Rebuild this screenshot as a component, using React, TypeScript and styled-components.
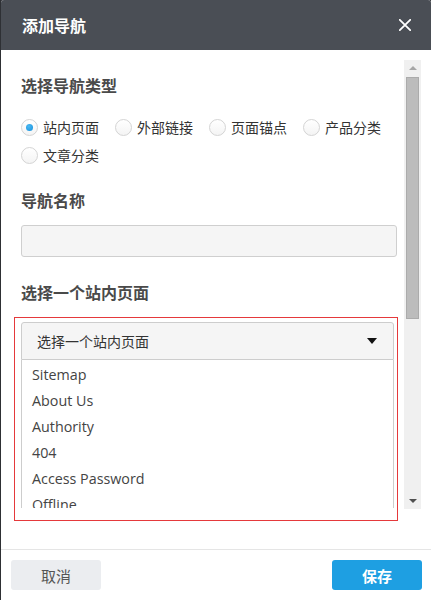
import React from 'react';
import styled, { createGlobalStyle } from 'styled-components';

const GlobalStyle = createGlobalStyle`
  html, body {
    margin: 0;
    padding: 0;
    background: #2e3034;
  }
  * {
    box-sizing: border-box;
  }
`;

const navTypes = ['站内页面', '外部链接', '页面锚点', '产品分类', '文章分类'];
const pages = ['Sitemap', 'About Us', 'Authority', '404', 'Access Password', 'Offline'];

const App: React.FC = () => {
  return (
    <>
      <GlobalStyle />
      <Dialog>
        <Header>
          <Title>添加导航</Title>
          <CloseButton aria-label="close">
            <svg width="12" height="12" viewBox="0 0 12 12">
              <path d="M0.8 0.8 L11.2 11.2 M11.2 0.8 L0.8 11.2" stroke="#fff" strokeWidth="1.8" strokeLinecap="round" />
            </svg>
          </CloseButton>
        </Header>

        <Body>
          <Content>
            <SectionTitle>选择导航类型</SectionTitle>
            <RadioGroup>
              {navTypes.map((t, i) => (
                <RadioItem key={t}>
                  <RadioCircle checked={i === 0} />
                  <RadioLabel>{t}</RadioLabel>
                </RadioItem>
              ))}
            </RadioGroup>

            <SectionTitle $gap={19}>导航名称</SectionTitle>
            <TextInput />

            <SectionTitle $gap={23}>选择一个站内页面</SectionTitle>
            <Highlight>
              <SelectBox>
                <SelectText>选择一个站内页面</SelectText>
                <Caret />
              </SelectBox>
              <ListBox>
                {pages.map((p) => (
                  <ListItem key={p}>{p}</ListItem>
                ))}
              </ListBox>
            </Highlight>
          </Content>

          <ScrollTrack>
            <ScrollArrow $up />
            <ScrollThumb />
            <TrackSpacer />
            <ScrollArrow />
          </ScrollTrack>
        </Body>

        <Footer>
          <CancelButton>取消</CancelButton>
          <SaveButton>保存</SaveButton>
        </Footer>
      </Dialog>
    </>
  );
};

export default App;

const Dialog = styled.div`
  margin-left: 1px;
  width: 430px;
  height: 600px;
  background: #fff;
  display: flex;
  flex-direction: column;
  border-radius: 3px 3px 0 0;
  overflow: hidden;
  font-family: 'Noto Sans', 'Noto Sans CJK SC', sans-serif;
`;

const Header = styled.header`
  height: 50px;
  flex: 0 0 50px;
  background: #4a4e55;
  display: flex;
  align-items: center;
  justify-content: space-between;
  padding: 0 20px 0 21px;
`;

const Title = styled.h1`
  margin: 0;
  color: #fff;
  font-size: 16px;
  font-weight: 700;
  font-family: 'Noto Sans CJK SC', sans-serif;
`;

const CloseButton = styled.button`
  border: none;
  background: transparent;
  padding: 0;
  width: 12px;
  height: 12px;
  display: flex;
  cursor: pointer;
`;

const Body = styled.div`
  flex: 1;
  display: flex;
  min-height: 0;
`;

const Content = styled.div`
  flex: 1;
  padding: 23px 7px 0 20px;
  display: flex;
  flex-direction: column;
`;

const SectionTitle = styled.h2<{ $gap?: number }>`
  margin: ${(p) => p.$gap ?? 0}px 0 0;
  font-size: 16px;
  line-height: 24px;
  font-weight: 700;
  color: #4a4a4a;
  font-family: 'Noto Sans CJK SC', sans-serif;
`;

const RadioGroup = styled.div`
  margin-top: 16px;
  display: flex;
  flex-wrap: wrap;
  column-gap: 16px;
`;

const RadioItem = styled.label`
  height: 28px;
  display: flex;
  align-items: center;
  gap: 5px;
  cursor: pointer;
`;

const RadioCircle = styled.span<{ checked?: boolean }>`
  width: 17px;
  height: 17px;
  border-radius: 50%;
  border: 1px solid #d4d4d4;
  background: linear-gradient(#fff, #f4f4f4);
  display: flex;
  align-items: center;
  justify-content: center;

  &::after {
    content: '';
    display: ${(p) => (p.checked ? 'block' : 'none')};
    width: 7px;
    height: 7px;
    border-radius: 50%;
    background: radial-gradient(circle at 40% 35%, #4ab8f2, #1690dc);
  }
`;

const RadioLabel = styled.span`
  font-size: 14px;
  color: #333;
  font-family: 'Noto Sans CJK SC', sans-serif;
`;

const TextInput = styled.input`
  margin-top: 13px;
  height: 32px;
  width: 100%;
  background: #f5f5f5;
  border: 1px solid #cfcfcf;
  border-radius: 3px;
  outline: none;
`;

const Highlight = styled.div`
  margin: 13px -1px 0 -7px;
  padding: 4px 3px 12px 6px;
  border: 1px solid #e5393b;
`;

const SelectBox = styled.div`
  height: 38px;
  background: #f5f5f5;
  border: 1px solid #cdcdcd;
  border-radius: 3px 3px 0 0;
  display: flex;
  align-items: center;
  justify-content: space-between;
  padding: 0 16px 0 15px;
`;

const SelectText = styled.span`
  font-size: 14px;
  color: #333;
  font-family: 'Noto Sans CJK SC', sans-serif;
`;

const Caret = styled.span`
  width: 0;
  height: 0;
  border-left: 5px solid transparent;
  border-right: 5px solid transparent;
  border-top: 6px solid #111;
`;

const ListBox = styled.ul`
  margin: 0;
  padding: 2px 0 0;
  list-style: none;
  height: 148px;
  overflow: hidden;
  border-left: 1px solid #cdcdcd;
  border-right: 1px solid #cdcdcd;
`;

const ListItem = styled.li`
  height: 26px;
  line-height: 26px;
  padding-left: 10px;
  font-size: 14.3px;
  color: #444;
  font-family: 'Open Sans', 'Noto Sans', sans-serif;
`;

const ScrollTrack = styled.div`
  width: 17px;
  margin: 10px 10px 40px 0;
  background: #f0f0f0;
  display: flex;
  flex-direction: column;
  align-items: center;
`;

const ScrollArrow = styled.span<{ $up?: boolean }>`
  flex: 0 0 4px;
  width: 0;
  height: 0;
  border-left: 4px solid transparent;
  border-right: 4px solid transparent;
  ${(p) =>
    p.$up
      ? 'border-bottom: 4px solid #a6a6a6; margin: 6px 0 7px;'
      : 'border-top: 4px solid #505050; margin: 7px 0 6px;'}
`;

const ScrollThumb = styled.div`
  width: 13px;
  height: 242px;
  background: #bcbcbc;
  border: 1px solid #ababab;
`;

const TrackSpacer = styled.div`
  flex: 1;
`;

const Footer = styled.footer`
  flex: 0 0 51px;
  border-top: 1px solid #e5e5e5;
  display: flex;
  justify-content: space-between;
  padding: 10px 9px 10px 10px;
`;

const BaseButton = styled.button`
  width: 90px;
  height: 30px;
  border: none;
  border-radius: 3px;
  font-size: 15px;
  font-family: 'Noto Sans CJK SC', sans-serif;
  cursor: pointer;
`;

const CancelButton = styled(BaseButton)`
  background: #ebedf0;
  color: #555;
`;

const SaveButton = styled(BaseButton)`
  background: #1e9fe2;
  color: #fff;
  font-weight: 700;
`;
